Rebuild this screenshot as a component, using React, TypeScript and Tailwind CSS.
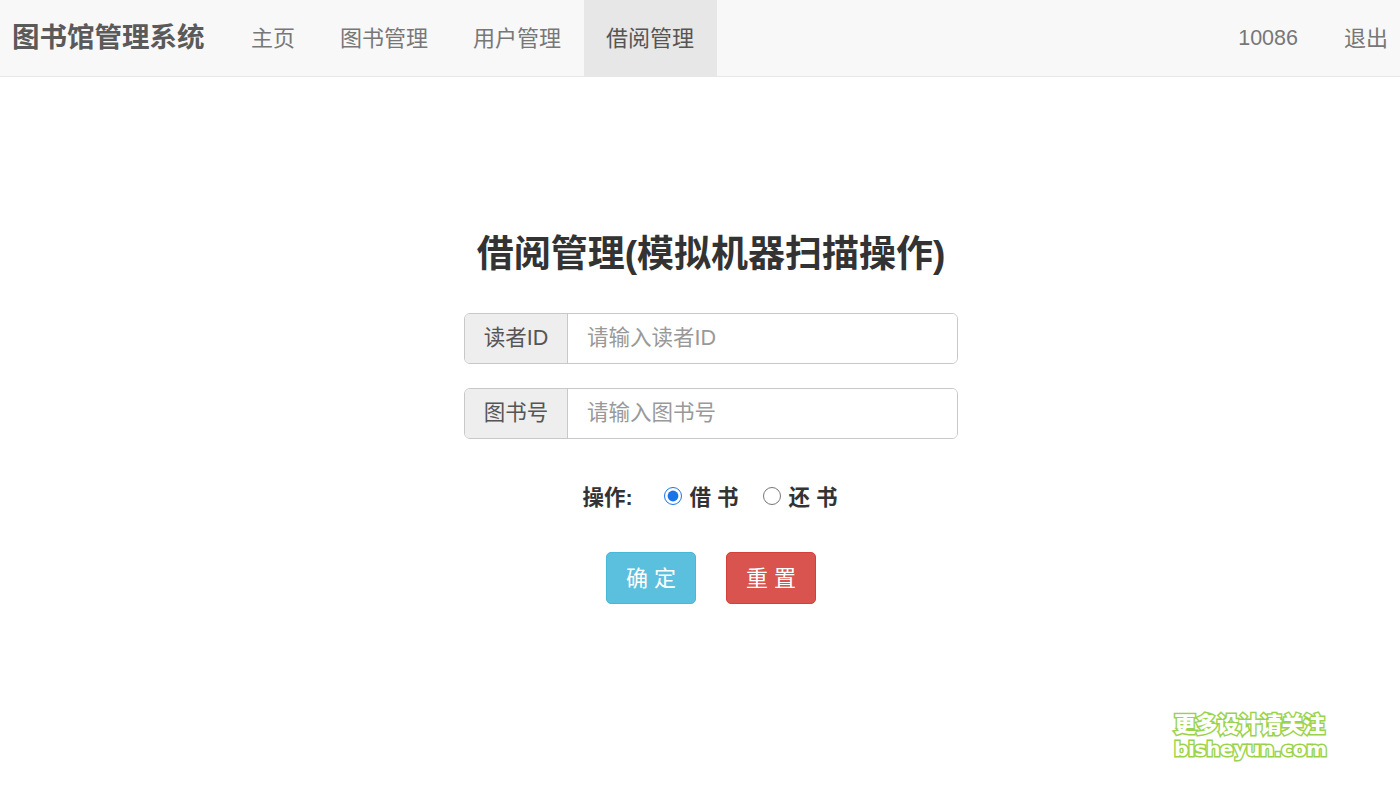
import React, { useState } from 'react';

const navItems = ['主页', '图书管理', '用户管理', '借阅管理'];

export default function App() {
  const [op, setOp] = useState<'borrow' | 'return'>('borrow');

  return (
    <div className="min-h-[787px] bg-white relative font-['Liberation_Sans','Noto_Sans_CJK_SC',sans-serif] text-[#333]">
      <nav className="h-[77px] bg-[#f8f8f8] border-b border-[#e7e7e7] flex items-stretch justify-between">
        <div className="flex items-stretch">
          <a className="flex items-center pl-[12px] pr-[24px] text-[27.5px] font-bold text-[#5a5a5a]">
            图书馆管理系统
          </a>
          <ul className="flex items-stretch">
            {navItems.map((item) => (
              <li
                key={item}
                className={
                  item === '借阅管理'
                    ? 'flex items-center px-[22.5px] text-[22px] text-[#555] bg-[#e7e7e7]'
                    : 'flex items-center px-[22.5px] text-[22px] text-[#777]'
                }
              >
                {item}
              </li>
            ))}
          </ul>
        </div>
        <ul className="flex items-stretch pr-[12px]">
          <li className="flex items-center px-[23px] text-[21.5px] text-[#777]">10086</li>
          <li className="flex items-center pl-[23px] text-[22px] text-[#777]">退出</li>
        </ul>
      </nav>

      <main className="flex flex-col items-center pt-[156px] pl-[22px]">
        <h2 className="text-[37px] leading-[44px] font-bold text-[#333]">借阅管理(模拟机器扫描操作)</h2>

        <div className="mt-[36px] flex flex-col gap-[24px] w-[494px]">
          <div className="flex h-[51px] rounded-[6px] border border-[#c8c8c8] overflow-hidden">
            <span className="w-[103px] shrink-0 flex items-center justify-center bg-[#eee] border-r border-[#c8c8c8] text-[21.5px] text-[#555]">
              读者ID
            </span>
            <input
              className="flex-1 px-[19px] text-[21.5px] text-[#555] outline-none placeholder:text-[#999] bg-white"
              placeholder="请输入读者ID"
            />
          </div>
          <div className="flex h-[51px] rounded-[6px] border border-[#c8c8c8] overflow-hidden">
            <span className="w-[103px] shrink-0 flex items-center justify-center bg-[#eee] border-r border-[#c8c8c8] text-[21.5px] text-[#555]">
              图书号
            </span>
            <input
              className="flex-1 px-[19px] text-[21.5px] text-[#555] outline-none placeholder:text-[#999] bg-white"
              placeholder="请输入图书号"
            />
          </div>
        </div>

        <div className="mt-[44px] h-[30px] flex items-center text-[21.5px] font-bold text-[#333]">
          <span className="mr-[31px] -ml-[2px]">操作:</span>
          <label className="flex items-center mr-[24px]">
            <input
              type="radio"
              name="op"
              checked={op === 'borrow'}
              onChange={() => setOp('borrow')}
              className="w-[18px] h-[18px] mr-[8px] accent-[#1a73e8] -mt-[4px]"
            />
            借 书
          </label>
          <label className="flex items-center">
            <input
              type="radio"
              name="op"
              checked={op === 'return'}
              onChange={() => setOp('return')}
              className="w-[18px] h-[18px] mr-[8px] accent-[#1a73e8] -mt-[4px]"
            />
            还 书
          </label>
        </div>

        <div className="mt-[39px] flex gap-[30px]">
          <button className="w-[90px] h-[52px] rounded-[5px] bg-[#5bc0de] border border-[#46b8da] text-white text-[22px]">
            确 定
          </button>
          <button className="w-[90px] h-[52px] rounded-[5px] bg-[#d9534f] border border-[#d43f3a] text-white text-[22px]">
            重 置
          </button>
        </div>
      </main>

      <div className="absolute left-[1174px] top-[708px] flex flex-col gap-[1px] font-black text-white [-webkit-text-stroke:3px_#9ad34a] [paint-order:stroke_fill]">
        <span className="font-['Noto_Sans_CJK_SC',sans-serif] text-[22px] leading-[28px] tracking-[-0.5px]">更多设计请关注</span>
        <span className="font-['DejaVu_Sans',sans-serif] font-bold text-[20px] leading-[24px] tracking-[-0.3px]">bisheyun.com</span>
      </div>
    </div>
  );
}
